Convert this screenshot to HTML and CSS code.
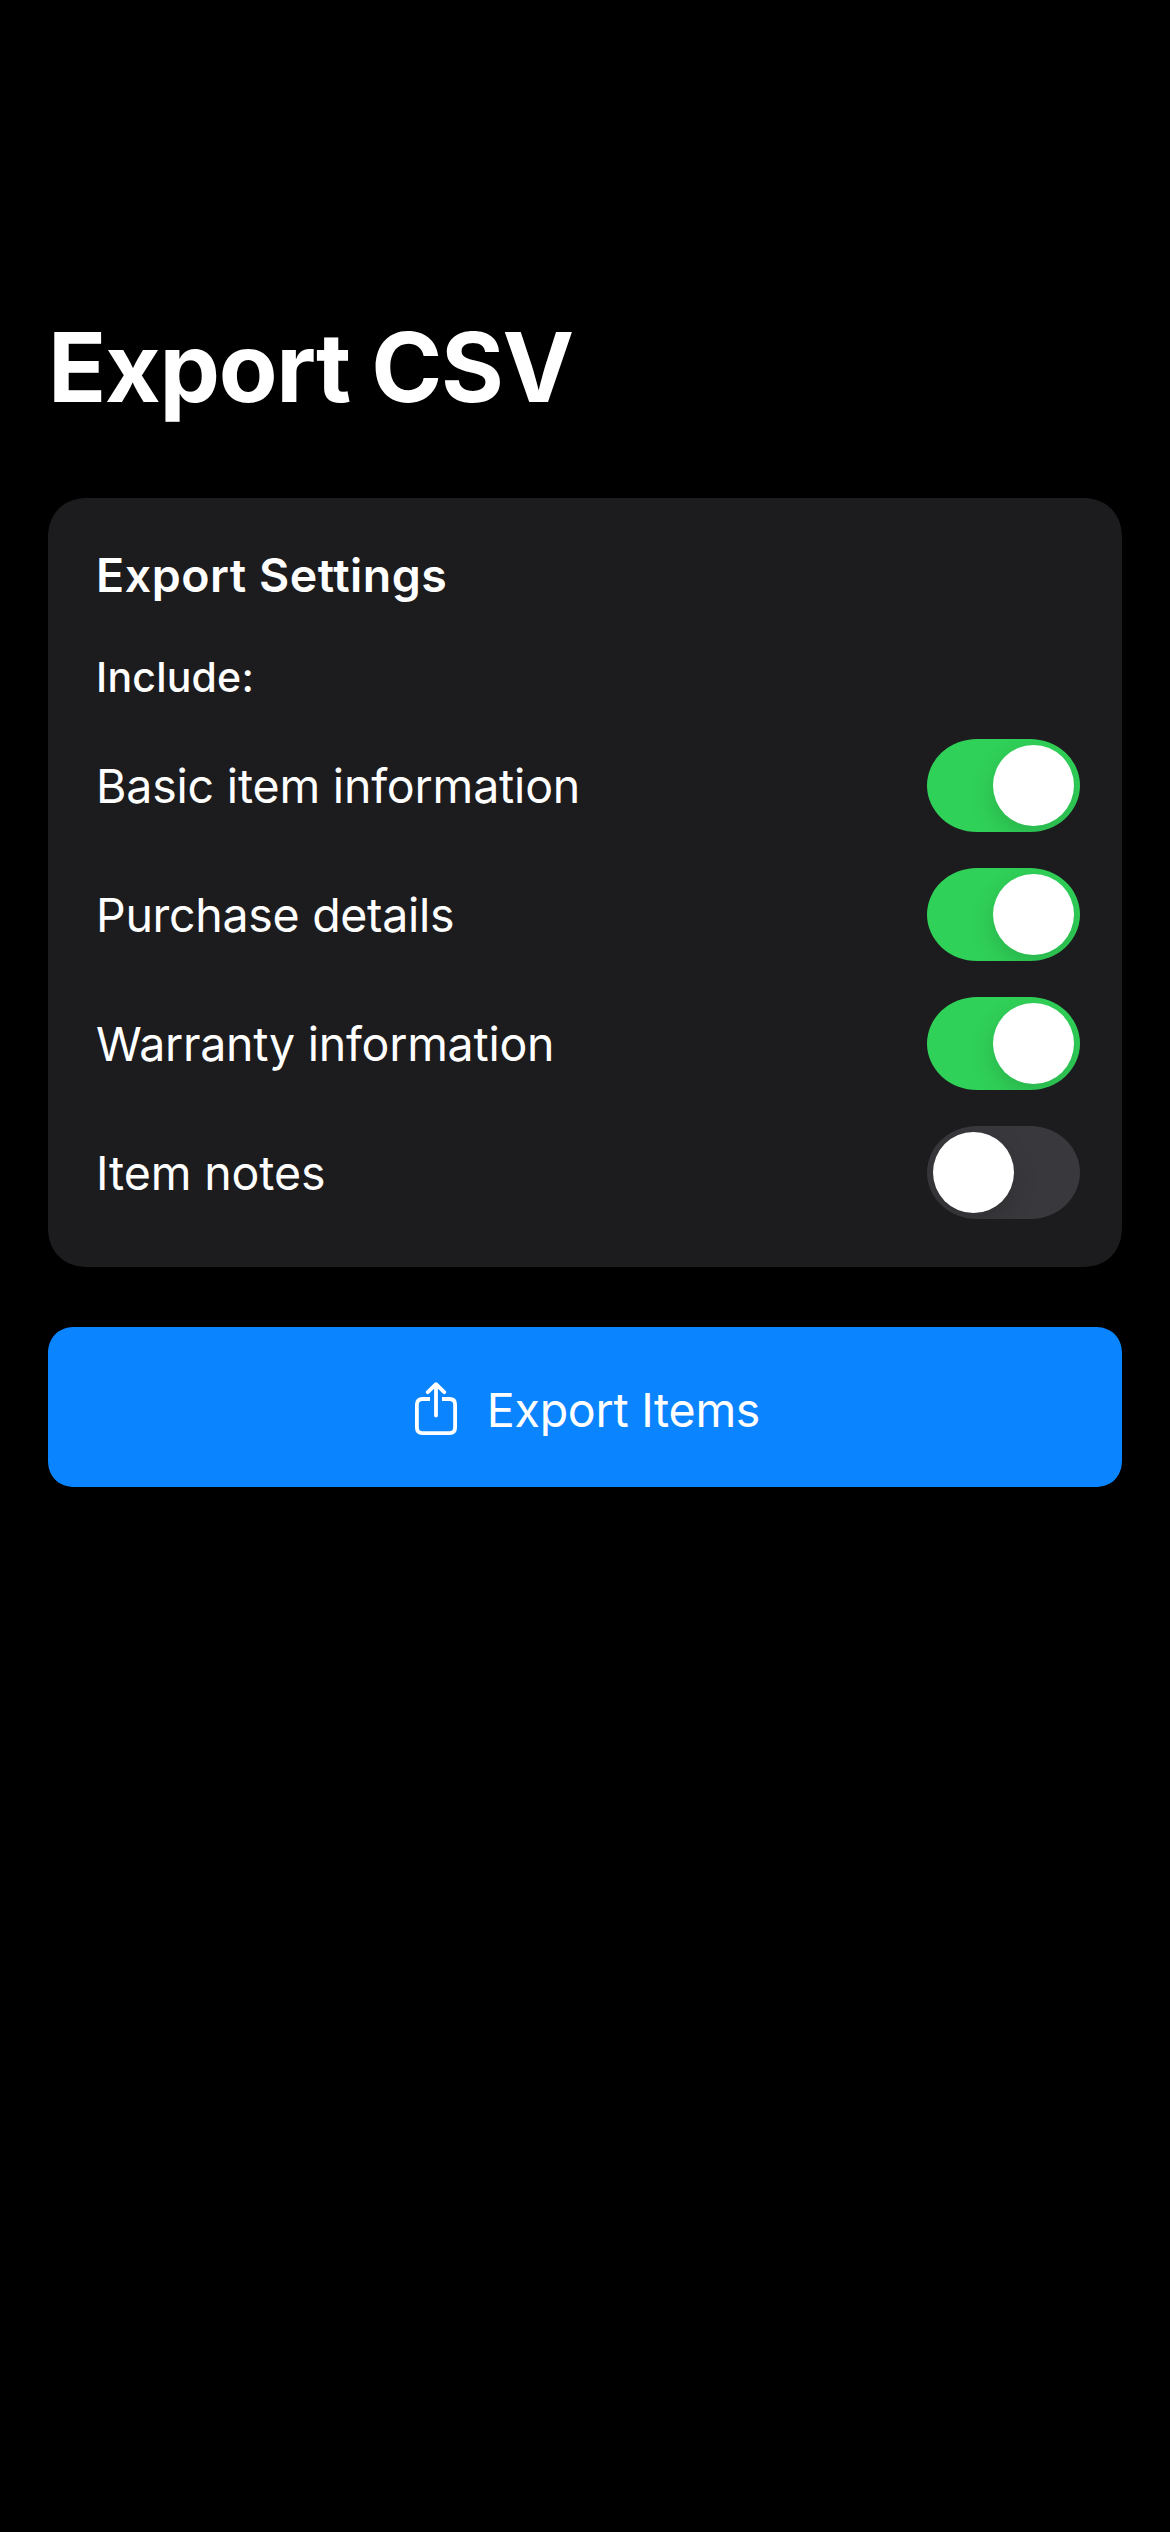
FILE: index.html
```html
<!DOCTYPE html>
<html lang="en">
<head>
<meta charset="utf-8">
<title>Export CSV</title>
<link rel="stylesheet" href="styles.css">
</head>
<body>
<main class="screen">
  <h1 class="title">Export CSV</h1>
  <section class="card">
    <h2 class="card-title">Export Settings</h2>
    <p class="include">Include:</p>
    <div class="row"><span class="label basic">Basic item information</span><span class="switch on"><span class="knob"></span></span></div>
    <div class="row"><span class="label purchase">Purchase details</span><span class="switch on"><span class="knob"></span></span></div>
    <div class="row"><span class="label warranty">Warranty information</span><span class="switch on"><span class="knob"></span></span></div>
    <div class="row"><span class="label notes">Item notes</span><span class="switch"><span class="knob"></span></span></div>
  </section>
  <button class="export" type="button">
    <svg class="share" width="42" height="53" viewBox="0 0 42 53" fill="none" stroke="currentColor" stroke-width="3.8"><path d="M15 17H7.5Q1.9 17 1.9 22.5V45.6Q1.9 51.1 7.5 51.1H34.5Q40.1 51.1 40.1 45.6V22.5Q40.1 17 34.5 17H27"/><path stroke-linecap="round" stroke-linejoin="round" d="M21 33.5V2.4M12.8 10.2L21 2.2L29.2 10.2"/></svg>
    <span class="export-text">Export Items</span>
  </button>
</main>
</body>
</html>
```
FILE: styles.css
```css
* { box-sizing: border-box; }
body { margin: 0; background: #000; color: #fff; font-family: Inter, "Liberation Sans", sans-serif; }
.screen { height: 2532px; padding: 306px 48px 0; }
.title { margin: 0; height: 122px; line-height: 122px; font-size: 96px; font-weight: 700; letter-spacing: -1.28px; }
.card { margin-top: 70px; height: 769px; padding: 48px 42px 48px 48px; border-radius: 40px; corner-shape: superellipse(1.15); background: #1c1c1e; }
.card-title { margin: 0; height: 58px; line-height: 58px; font-size: 46.5px; font-weight: 600; letter-spacing: .51px; }
.include { margin: 46px 0 35px; height: 54px; line-height: 54px; font-size: 41px; font-weight: 500; letter-spacing: .21px; }
.row { display: flex; align-items: center; justify-content: space-between; height: 93px; margin-bottom: 36px; }
.label { font-size: 46.5px; }
.basic { letter-spacing: -.19px; }
.purchase { letter-spacing: -.3px; }
.warranty { letter-spacing: -.27px; }
.notes { letter-spacing: -.12px; }
.switch { display: flex; width: 153px; height: 93px; padding: 6px; border-radius: 50px / 46.5px; background: #39393d; overflow: hidden; }
.on { justify-content: flex-end; background: #30d158; }
.knob { width: 81px; height: 81px; border-radius: 50%; background: #fff; box-shadow: 0 9px 24px rgba(0, 0, 0, .15); }
.export { display: flex; align-items: center; justify-content: center; gap: 30px; width: 100%; height: 160px; margin-top: 60px; padding: 3px 0 0 5px; border: 0; border-radius: 27px; corner-shape: superellipse(1.15); background: #0a84ff; color: #fff; font: 400 46.5px Inter, "Liberation Sans", sans-serif; letter-spacing: -.27px; }
.export-text { padding-top: 2px; }
```
